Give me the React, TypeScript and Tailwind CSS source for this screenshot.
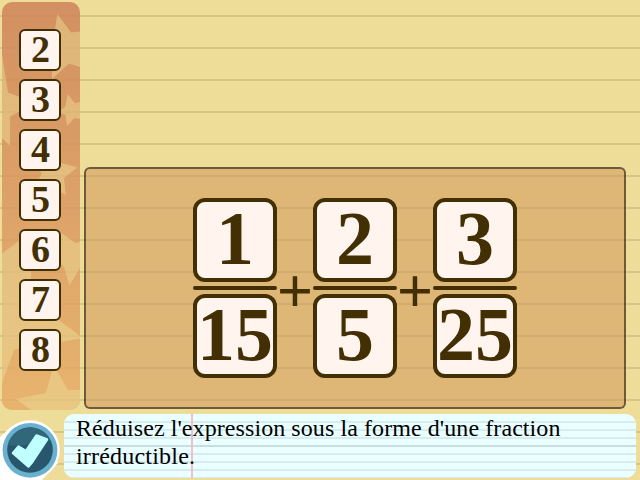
const FACTORS = [2, 3, 4, 5, 6, 7, 8];
const FRACTIONS = [
  [1, 15],
  [2, 5],
  [3, 25],
];

function Sidebar() {
  return (
    <aside className="relative ml-[2px] mt-[2px] flex h-[408px] w-[78px] flex-col items-center gap-2 overflow-hidden rounded-[10px] pr-[2px] pt-[27px]">
      <svg className="absolute inset-0" width="78" height="408" viewBox="2 2 78 408">
        <defs>
          <linearGradient id="orange" gradientUnits="userSpaceOnUse" x1="0" y1="2" x2="0" y2="410">
            <stop offset="0" stopColor="#d39062" />
            <stop offset="1" stopColor="#e7b46e" />
          </linearGradient>
          <linearGradient id="sand" gradientUnits="userSpaceOnUse" x1="0" y1="2" x2="0" y2="410">
            <stop offset="0" stopColor="#dfb57a" />
            <stop offset="1" stopColor="#e9c883" />
          </linearGradient>
        </defs>
        <rect x="2" y="2" width="78" height="408" fill="url(#orange)" />
        <g fill="url(#sand)">
          <path d="M57.300 14L71 32.500 80 31.500V67L69 63.500 52 79V50Z" />
          <path d="M2 55L8 92.500 30 101 30 106 10 116.500V146L2 138Z" />
          <path d="M67.700 94.300L75 103.300 80 102V119L74.500 118 67 126 65.500 115 58 112 65 107Z" />
          <path d="M77.300 167.300L61 163 50 160 45 171 37 169 42 173 39 179 50 185 59 191 65.700 195 64 178Z" />
          <path d="M2 253.500L19 241 40 231 61 232.700 76 243.300 80 241.700V410H2Z" />
        </g>
        <g fill="url(#orange)">
          <path d="M31 270L50 255 64 267 69.300 285.500 80 268V336L60.700 321.500 31 290Z" />
          <path d="M30 345L14 350 2 383V410H31L16 399 46 393 52 371H57L68 390H80V338.500L61 342Z" />
        </g>
        <g fill="#6f4b20" fillOpacity="0.03">
          {Array.from({ length: 13 }, (_, i) => (
            <rect key={i} x="2" y={15 + i * 32} width="78" height="2" />
          ))}
        </g>
      </svg>
      {FACTORS.map((n) => (
        <button
          key={n}
          className="relative h-[42px] w-[42px] shrink-0 rounded-[6px] border-2 border-[#432f04] bg-[#fff4ee] pb-[2px] pl-[1px] text-center text-[38px] leading-[36px] font-bold text-[#432f04]"
        >
          {n}
        </button>
      ))}
    </aside>
  );
}

function Tile({ value }: { value: number }) {
  return (
    <div className="flex h-[84px] w-[84px] items-center justify-center rounded-[12px] border-4 border-[#432f04] bg-[#fff4ee] pb-1 text-[76px] leading-[76px] font-bold">
      {value}
    </div>
  );
}

function Expression() {
  return (
    <main className="ml-[4px] mt-[167px] flex h-[242px] w-[542px] items-start justify-center rounded-[6px] border-2 border-black/50 bg-[#ce9155]/50 pt-[29px] text-[#432f04]">
      {FRACTIONS.map(([top, bottom], i) => (
        <div key={top} className="flex">
          {i > 0 && (
            <div className="flex h-[180px] w-9 items-center justify-center pt-[6px] text-[64px] leading-none font-bold">
              +
            </div>
          )}
          <div className="flex flex-col gap-1">
            <Tile value={top} />
            <div className="h-1 w-[84px] rounded-full bg-[#432f04]" />
            <Tile value={bottom} />
          </div>
        </div>
      ))}
    </main>
  );
}

function CheckButton() {
  return (
    <svg className="mt-[4px] h-[66px] w-16 shrink-0" viewBox="0 414 64 66" aria-label="OK">
      <path d="M0 437L12 426H30L58 463 42 480H0Z" fill="#fff" />
      <circle cx="30" cy="450" r="29.800" fill="#fff" />
      <circle cx="30" cy="450.300" r="27.400" fill="#69b1ce" />
      <circle cx="30" cy="450" r="22.800" fill="#28566c" />
      <path d="M8 445A22.800 22.800 0 0 1 49 437.500Q29 448 8 445Z" fill="#316779" />
      <path
        d="M13 453L18.500 446.500 26 451 36.500 435.500 47 439.500 31.500 463 28.500 466.500Z"
        fill="#c0ffff"
        stroke="#c0ffff"
        strokeWidth="2.500"
        strokeLinejoin="round"
      />
    </svg>
  );
}

function Instruction() {
  return (
    <div className="relative mt-[4px] h-[64px] w-[572px] overflow-hidden rounded-[10px] bg-[#eaffff]">
      <svg className="absolute inset-0" width="572" height="64">
        {Array.from({ length: 8 }, (_, i) => (
          <rect key={i} y={7 + i * 8} width="572" height="2" fill={i === 3 ? "#c8dde0" : "#d6ecf0"} />
        ))}
        <rect x="127" width="2" height="64" fill="#f2bfc4" />
      </svg>
      <p className="relative pl-3 text-[24px] leading-[28px] tracking-[0.08px] text-black">
        Réduisez l'expression sous la forme d'une fraction
        <br />
        <span className="tracking-[0.2px]">irréductible.</span>
      </p>
    </div>
  );
}

export default function App() {
  return (
    <div className="h-[480px] w-[640px] overflow-hidden bg-[#eedd99] bg-[linear-gradient(transparent_15px,#d6c686_15px,#d6c686_17px,transparent_17px)] bg-[length:640px_32px] font-['Liberation_Serif',serif]">
      <div className="flex h-[410px] items-start">
        <Sidebar />
        <Expression />
      </div>
      <div className="flex h-[70px] items-start">
        <CheckButton />
        <Instruction />
      </div>
    </div>
  );
}
